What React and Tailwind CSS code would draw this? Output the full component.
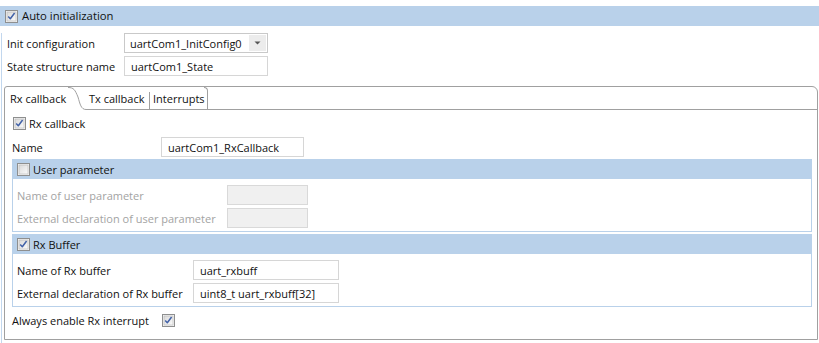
import React from "react";

function Check({ checked }) {
  return (
    <svg width="13" height="13" viewBox="0 0 13 13" className="shrink-0">
      <defs>
        <linearGradient id="cbg" x1="0" y1="0" x2="1" y2="1">
          <stop offset="0" stopColor="#d9d9d9" />
          <stop offset="1" stopColor="#fbfbfb" />
        </linearGradient>
      </defs>
      <rect x="0.5" y="0.5" width="12" height="12" fill="#f4f4f4" stroke="#8e8f8f" />
      <rect x="2" y="2" width="9" height="9" fill="url(#cbg)" stroke="#b6b6b6" strokeWidth="0.6" />
      {checked && (
        <path d="M3.2 6.4 L5.3 8.7 L9.6 3" fill="none" stroke="#4262a8" strokeWidth="1.5" strokeLinejoin="round" />
      )}
    </svg>
  );
}

function Input({ value, w, disabled }) {
  return (
    <div
      className={
        "h-[20px] border flex items-center pl-[6px] shrink-0 " +
        (disabled ? "bg-[#f0f0f0] border-[#d9d9d9]" : "bg-white border-[#d6d6d6]")
      }
      style={{ width: w }}
    >
      {value}
    </div>
  );
}

function GroupHeader({ checked, label }) {
  return (
    <div className="h-[19px] bg-[#b9d1ea] flex items-center pl-[4px] gap-[3px]">
      <Check checked={checked} />
      <span>{label}</span>
    </div>
  );
}

export default function App() {
  return (
    <div className="w-[819px] h-[343px] bg-white overflow-hidden font-['Open_Sans',sans-serif] text-[11px] text-[#111] leading-none whitespace-nowrap">
      <div className="pt-[6px]">
        <div className="h-[20px] bg-[#b9d1ea] flex items-center pl-[5px] gap-[4px] text-[11.3px]">
          <Check checked />
          <span>Auto initialization</span>
        </div>
        <div className="ml-[1px] border-l border-[#c2d7ee] h-[311px]">
          <div className="flex items-center h-[20px] mt-[7px]">
            <div className="w-[122px] pl-[5px]">Init configuration</div>
            <div className="w-[144px] h-[20px] border border-[#c9c9c9] flex items-center bg-white">
              <div className="flex-1 pl-[5px]">uartCom1_InitConfig0</div>
              <div className="w-[17px] h-[16px] mr-[1px] bg-[#ececec] flex items-center justify-center">
                <svg width="7" height="4" viewBox="0 0 7 4">
                  <path d="M0.5 0.5 L6.5 0.5 L3.5 3.5 Z" fill="#555" />
                </svg>
              </div>
            </div>
          </div>
          <div className="flex items-center h-[20px] mt-[3px]">
            <div className="w-[122px] pl-[5px]">State structure name</div>
            <Input value="uartCom1_State" w={144} />
          </div>

          <div className="mt-[10px] ml-[2px] w-[814px] h-[254px] border border-[#a0a0a0] rounded-tr-[6px] rounded-tl-[3px] flex flex-col">
            <div className="flex h-[23px] shrink-0">
              <div className="w-[63px] pl-[5px] flex items-center">Rx callback</div>
              <svg width="18" height="23" viewBox="0 0 18 23" className="shrink-0">
                <path d="M0 0.5 C6 0.5 7 3 10 10 C12 17 13 22.5 18 22.5" fill="none" stroke="#a0a0a0" />
              </svg>
              <div className="w-[64px] border-b border-[#a0a0a0] flex items-center pl-[3px] relative">
                Tx callback
                <div className="absolute right-0 top-[5px] bottom-0 w-px bg-[#a0a0a0]" />
              </div>
              <div className="w-[58px] border-b border-[#a0a0a0] flex items-center pl-[3px] relative">
                Interrupts
                <div className="absolute right-0 top-[5px] bottom-0 w-px bg-[#a0a0a0]" />
                <div className="absolute right-0 top-0 w-[4px] h-[6px] border-r border-t border-[#a0a0a0] rounded-tr-[4px]" />
              </div>
              <div className="flex-1 border-b border-[#a0a0a0]" />
            </div>

            <div className="flex items-center h-[20px] mt-[3px] pl-[8px] gap-[3px]">
              <Check checked />
              <span>Rx callback</span>
            </div>
            <div className="flex items-center h-[20px] mt-[4px] pl-[7px]">
              <div className="w-[149px]">Name</div>
              <Input value="uartCom1_RxCallback" w={143} />
            </div>

            <div className="mt-[2px] ml-[7px] w-[800px] border border-[#b9d1ea]">
              <GroupHeader label="User parameter" />
              <div className="pl-[4px] pt-[6px] pb-[3px] text-[#a3a3a3]">
                <div className="flex items-center h-[20px]">
                  <div className="w-[210px]">Name of user parameter</div>
                  <Input w={81} disabled />
                </div>
                <div className="flex items-center h-[20px] mt-[3px]">
                  <div className="w-[210px]">External declaration of user parameter</div>
                  <Input w={81} disabled />
                </div>
              </div>
            </div>

            <div className="mt-[2px] ml-[7px] w-[800px] border border-[#b9d1ea]">
              <GroupHeader checked label="Rx Buffer" />
              <div className="pl-[4px] pt-[6px] pb-[3px]">
                <div className="flex items-center h-[20px]">
                  <div className="w-[176px]">Name of Rx buffer</div>
                  <Input value="uart_rxbuff" w={146} />
                </div>
                <div className="flex items-center h-[20px] mt-[3px]">
                  <div className="w-[176px]">External declaration of Rx buffer</div>
                  <Input value="uint8_t uart_rxbuff[32]" w={146} />
                </div>
              </div>
            </div>

            <div className="flex items-center h-[20px] mt-[3px] pl-[7px]">
              <div className="w-[150px]">Always enable Rx interrupt</div>
              <Check checked />
            </div>
          </div>
        </div>
      </div>
    </div>
  );
}
